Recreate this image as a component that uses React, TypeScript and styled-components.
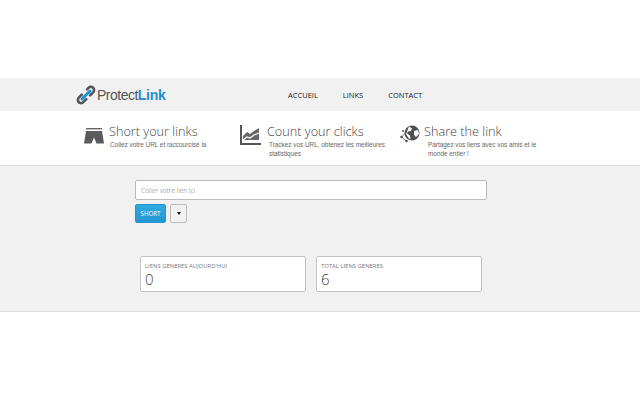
import React from 'react';
import styled, { createGlobalStyle } from 'styled-components';

const GlobalStyle = createGlobalStyle`
  html, body {
    margin: 0;
    padding: 0;
    background: #fff;
    font-family: "Open Sans", "Liberation Sans", sans-serif;
  }
`;

const features = [
  { key: 'short', title: 'Short your links', text: 'Collez votre URL et raccourcisé la', width: 156, textWidth: 110, indent: 1 },
  { key: 'count', title: 'Count your clicks', text: 'Trackez vos URL, obtenez les meilleures statistiques', width: 160, textWidth: 125, indent: 2 },
  { key: 'share', title: 'Share the link', text: 'Partagez vos liens avec vos amis et le monde entier !', width: 150, textWidth: 115, indent: 4 },
];

const LinkIcon = () => (
  <svg width="20" height="20" viewBox="0 0 20 20">
    <path d="M2.8 17.2a3.2 3.2 0 0 1 0-4.5l3-3" fill="none" stroke="#555" strokeWidth="2.6" strokeLinecap="round" />
    <path d="M2.8 17.2a3.2 3.2 0 0 0 4.5 0l3-3" fill="none" stroke="#555" strokeWidth="2.6" strokeLinecap="round" />
    <path d="M11 4.3l1.5-1.5a3.2 3.2 0 0 1 4.6 0 3.2 3.2 0 0 1 0 4.6l-3 3" fill="none" stroke="#555" strokeWidth="2.6" strokeLinecap="round" />
    <path d="M6 14l8-8" stroke="#1c8fd0" strokeWidth="3" strokeLinecap="round" />
  </svg>
);

const ShortsIcon = () => (
  <svg width="20" height="16" viewBox="0 0 20 16">
    <rect x="2" y="0" width="16" height="1.4" fill="#666" />
    <path d="M2 3h16l2 12.5h-7.5L10 9.5l-2.5 6H0z" fill="#5b5b5b" />
  </svg>
);

const ChartIcon = () => (
  <svg width="21" height="20" viewBox="0 0 21 20">
    <path d="M1 0v19h20" fill="none" stroke="#555" strokeWidth="2" />
    <path d="M3 11l4-4 3 2 4-3 5-3v12H3z" fill="#666" />
    <path d="M3 15l4-3 3 1 4-3 5-2" fill="none" stroke="#fff" strokeWidth="1.2" />
  </svg>
);

const GlobeIcon = () => (
  <svg width="20" height="18" viewBox="0 0 20 18">
    <circle cx="12" cy="8" r="7.5" fill="#505050" />
    <path d="M9 1.5l3 2-1 2.5-3 .5-1 2 3 2 .5 4-2-1.5-2.5-4zM14 6l4-1 1 4-3 3-2-2z" fill="#fff" />
    <circle cx="1.5" cy="12" r="1.3" fill="#555" />
    <circle cx="6.5" cy="16" r="1.3" fill="#555" />
    <circle cx="3" cy="6" r="1" fill="#555" />
    <path d="M1.5 12L5 8.5M1.5 12l5 4" stroke="#555" strokeWidth="0.8" />
  </svg>
);

const icons: Record<string, React.ReactNode> = {
  short: <ShortsIcon />,
  count: <ChartIcon />,
  share: <GlobeIcon />,
};

export default function App() {
  return (
    <Page>
      <GlobalStyle />
      <NavBar>
        <Logo>
          <LinkIcon />
          <LogoText>
            Protect<b>Link</b>
          </LogoText>
        </Logo>
        <NavLinks>
          <NavLink>ACCUEIL</NavLink>
          <NavLink>LINKS</NavLink>
          <NavLink>CONTACT</NavLink>
        </NavLinks>
      </NavBar>

      <Features>
        {features.map((f) => (
          <Feature key={f.key} $width={f.width}>
            <FeatureIcon $indent={f.indent}>{icons[f.key]}</FeatureIcon>
            <div>
              <FeatureTitle>{f.title}</FeatureTitle>
              <FeatureText $width={f.textWidth} $indent={f.indent}>
                {f.text}
              </FeatureText>
            </div>
          </Feature>
        ))}
      </Features>

      <Main>
        <LinkInput placeholder="Coller votre lien ici" />
        <Actions>
          <ShortButton>SHORT</ShortButton>
          <CaretButton>
            <Caret />
          </CaretButton>
        </Actions>
        <Cards>
          <Card>
            <CardLabel>LIENS GENERES AUJOURD'HUI</CardLabel>
            <CardValue>0</CardValue>
          </Card>
          <Card>
            <CardLabel>TOTAL LIENS GENERES</CardLabel>
            <CardValue>6</CardValue>
          </Card>
        </Cards>
      </Main>
    </Page>
  );
}

const Page = styled.div`
  width: 640px;
  height: 400px;
  padding-top: 78px;
  box-sizing: border-box;
  overflow: hidden;
  background: #fff;
`;

const NavBar = styled.div`
  height: 33px;
  background: #f1f1f1;
  display: flex;
  align-items: center;
  padding-left: 76px;
`;

const Logo = styled.div`
  display: flex;
  align-items: center;
  gap: 1px;
  width: 212px;
`;

const LogoText = styled.span`
  font-family: "Liberation Sans", Arial, sans-serif;
  font-size: 14px;
  letter-spacing: -0.5px;
  color: #555;

  b {
    color: #1c8fd0;
    font-weight: 700;
    letter-spacing: -0.3px;
  }
`;

const NavLinks = styled.div`
  display: flex;
  gap: 25px;
`;

const NavLink = styled.span`
  font-size: 7.5px;
  color: #222;
`;

const Features = styled.div`
  height: 55px;
  box-sizing: border-box;
  display: flex;
  padding: 11px 0 0 84px;
  background: #fff;
  border-bottom: 1px solid #ddd;
`;

const Feature = styled.div<{ $width: number }>`
  width: ${(p) => p.$width}px;
  display: flex;
  align-items: flex-start;
`;

const FeatureIcon = styled.div<{ $indent: number }>`
  width: ${(p) => (p.$indent === 1 ? 25 : p.$indent === 2 ? 27 : 24)}px;
  flex-shrink: 0;
  padding-top: ${(p) => (p.$indent === 1 ? 5 : 3)}px;
`;

const FeatureTitle = styled.div`
  font-size: 12.7px;
  font-weight: 300;
  line-height: 19px;
  color: #444;
  white-space: nowrap;
`;

const FeatureText = styled.div<{ $width: number; $indent: number }>`
  width: ${(p) => p.$width}px;
  margin-left: ${(p) => p.$indent}px;
  margin-top: -1px;
  font-family: "Liberation Sans", Arial, sans-serif;
  font-size: 6.4px;
  line-height: 9px;
  color: #666;
`;

const Main = styled.div`
  height: 146px;
  box-sizing: border-box;
  padding: 14px 0 0 135px;
  background: #f1f1f1;
  border-bottom: 1px solid #ddd;
`;

const LinkInput = styled.input`
  display: block;
  width: 352px;
  height: 20px;
  box-sizing: border-box;
  padding: 0 5px;
  border: 1px solid #bbb;
  border-radius: 2px;
  background: #fff;
  font-family: "Open Sans", sans-serif;
  font-size: 6.3px;
  outline: none;

  &::placeholder {
    color: #aaa;
  }
`;

const Actions = styled.div`
  display: flex;
  align-items: center;
  gap: 4px;
  margin-top: 4px;
`;

const ShortButton = styled.button`
  width: 31px;
  height: 19px;
  padding: 0;
  border: 1px solid #2b93c8;
  border-radius: 2px;
  background: linear-gradient(#2eaae0, #2596d2);
  color: #fff;
  font-family: "Open Sans", sans-serif;
  font-size: 6.2px;
  font-weight: 400;
`;

const CaretButton = styled.button`
  width: 17px;
  height: 19px;
  padding: 0;
  display: flex;
  align-items: center;
  justify-content: center;
  border: 1px solid #bbb;
  border-radius: 2px;
  background: #f2f2f2;
`;

const Caret = styled.span`
  width: 0;
  height: 0;
  border-left: 2.5px solid transparent;
  border-right: 2.5px solid transparent;
  border-top: 3px solid #111;
`;

const Cards = styled.div`
  display: flex;
  gap: 10px;
  margin: 33px 0 0 5px;
`;

const Card = styled.div`
  width: 166px;
  height: 36px;
  box-sizing: border-box;
  padding: 5px 4px 0;
  background: #fff;
  border: 1px solid #c4c4c4;
  border-radius: 2px;
`;

const CardLabel = styled.div`
  font-size: 5.9px;
  line-height: 9px;
  color: #777;
`;

const CardValue = styled.div`
  font-size: 15px;
  font-weight: 300;
  line-height: 16px;
  color: #444;
`;
